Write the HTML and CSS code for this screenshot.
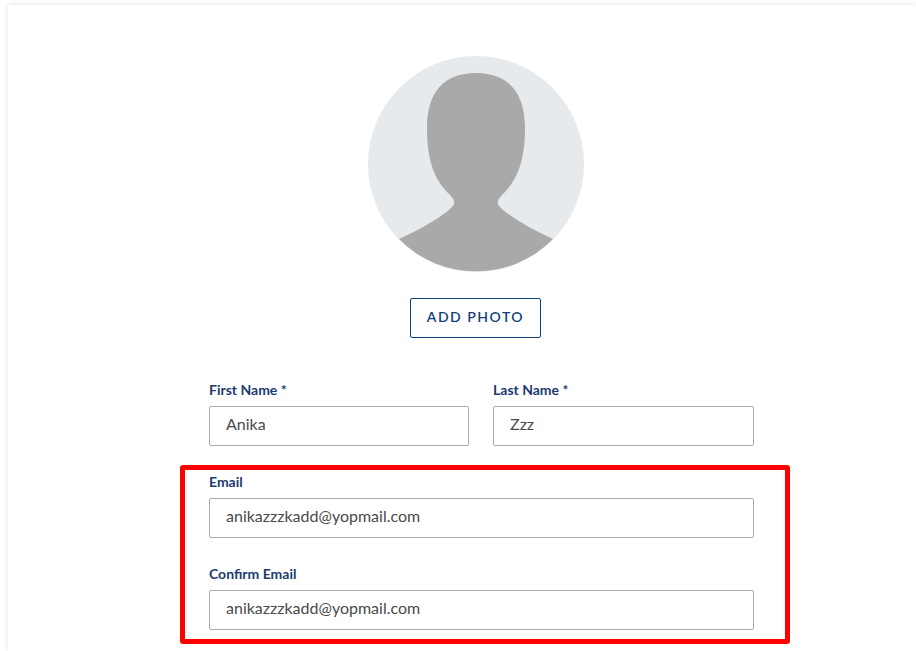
FILE: index.html
```html
<!DOCTYPE html>
<html lang="en">
<head>
<meta charset="utf-8">
<title>Profile</title>
<link rel="stylesheet" href="styles.css">
</head>
<body>
<main class="card">
  <div class="photo">
    <svg class="avatar" width="216" height="216" viewBox="0 0 216 216" role="img" aria-label="Profile placeholder">
      <circle cx="108" cy="108" r="108" fill="#e7eaed"/>
      <path fill="#a9a9a9" d="M108 17C76 17 59 36 59 72C59 104 66 122 79 136C84 141 87 144 86 148C84 154 60 170 31 183A108 108 0 0 0 185 183C156 170 132 154 130 148C129 144 132 141 137 136C150 122 157 104 157 72C157 36 140 17 108 17Z"/>
    </svg>
    <button class="photo-btn" type="button">ADD PHOTO</button>
  </div>
  <form class="form">
    <div class="row">
      <div class="field">
        <label class="label" for="first">First Name *</label>
        <input class="input" id="first" value="Anika">
      </div>
      <div class="field">
        <label class="label" for="last">Last Name *</label>
        <input class="input" id="last" value="Zzz">
      </div>
    </div>
    <div class="emails">
      <div class="highlight"></div>
      <div class="field">
        <label class="label" for="email">Email</label>
        <input class="input" id="email" value="anikazzzkadd@yopmail.com">
      </div>
      <div class="field">
        <label class="label" for="confirm">Confirm Email</label>
        <input class="input" id="confirm" value="anikazzzkadd@yopmail.com">
      </div>
    </div>
  </form>
</main>
</body>
</html>
```

FILE: styles.css
```css
* {
  box-sizing: border-box;
}

html,
body {
  height: 100%;
  overflow: hidden;
}

body {
  margin: 0;
  padding: 5px 0 0 8px;
  background: #fff;
  font-family: Lato, "Liberation Sans", sans-serif;
}

.card {
  height: 100%;
  padding: 51px 0 0 201px;
  background: #fff;
  box-shadow: 0 0 6px rgba(0, 0, 0, 0.12);
}

.photo {
  width: 534px;
  display: flex;
  flex-direction: column;
  align-items: center;
}

.avatar {
  display: block;
}

.photo-btn {
  width: 131px;
  height: 40px;
  margin: 26px 1px 0 0;
  padding: 0 0 4px;
  background: #fff;
  border: 1px solid #134079;
  border-radius: 2px;
  color: #134079;
  font: 600 14px Lato, sans-serif;
  letter-spacing: 1.5px;
}

.form {
  width: 545px;
  margin-top: 42px;
  display: flex;
  flex-direction: column;
  gap: 26px;
}

.row {
  display: grid;
  grid-template-columns: 260px 261px;
  column-gap: 24px;
}

.emails {
  position: relative;
  display: flex;
  flex-direction: column;
  gap: 26px;
}

.highlight {
  position: absolute;
  left: -29px;
  top: -7px;
  width: 610px;
  height: 179px;
  border: 5px solid #ff0000;
  border-radius: 3px;
  pointer-events: none;
}

.field {
  display: flex;
  flex-direction: column;
}

.label {
  height: 20px;
  margin-bottom: 6px;
  color: #1c3b6e;
  font-size: 14px;
  font-weight: 700;
  line-height: 20px;
}

.input {
  width: 100%;
  height: 40px;
  padding: 0 16px 5px;
  background: #fff;
  border: 1px solid #aaaaaa;
  border-radius: 2px;
  color: #4a4a4a;
  font: 400 16px Lato, sans-serif;
}
```
